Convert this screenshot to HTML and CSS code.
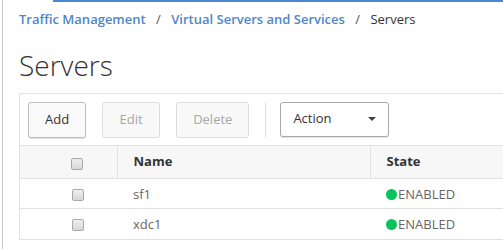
FILE: index.html
```html
<!DOCTYPE html>
<html lang="en">
<head>
<meta charset="utf-8" />
<title>Servers</title>
<link rel="stylesheet" href="styles.css">
</head>
<body>
<div class="frame">
  <div class="topline"></div>
  <nav class="crumbs">
    <a href="#">Traffic Management</a>
    <span class="sep">/</span>
    <a href="#">Virtual Servers and Services</a>
    <span class="sep">/</span>
    <span class="current">Servers</span>
  </nav>
  <h1>Servers</h1>
  <div class="panel">
    <div class="toolbar">
      <button class="btn">Add</button>
      <button class="btn" disabled>Edit</button>
      <button class="btn" disabled>Delete</button>
      <span class="divider"></span>
      <button class="btn select">Action <span class="caret"></span></button>
    </div>
    <table class="grid">
      <thead>
        <tr>
          <th class="chk"><span class="box"></span></th>
          <th class="name">Name</th>
          <th>State</th>
        </tr>
      </thead>
      <tbody>
        <tr>
          <td class="chk"><span class="box"></span></td>
          <td class="name">sf1</td>
          <td><span class="dot"></span>ENABLED</td>
        </tr>
        <tr>
          <td class="chk"><span class="box"></span></td>
          <td class="name">xdc1</td>
          <td><span class="dot"></span>ENABLED</td>
        </tr>
      </tbody>
    </table>
  </div>
</div>
</body>
</html>
```
FILE: styles.css
```css
*{box-sizing:border-box;}
body{
  margin:0;
  font-family:'Open Sans','Liberation Sans',sans-serif;
  color:#333;
  background:#fff;
}
.frame{
  position:relative;
  min-height:249px;
  margin-left:2px;
  border-left:1px solid #c8c8c8;
  padding-left:16px;
}
.topline{position:absolute;top:0;left:50px;right:0;height:2px;background:#4a86d4;}
.crumbs{padding-top:10px;font-size:13px;font-weight:600;height:28px;white-space:nowrap;}
.crumbs a{color:#4e86c8;text-decoration:none;}
.crumbs .sep{color:#555;font-weight:400;margin:0 7px;}
.crumbs .current{color:#333;font-weight:400;}
h1{margin:17px 0 0;font-size:28px;font-weight:300;color:#333;line-height:40px;height:48px;}
.panel{border:1px solid #e2e2e2;border-right:none;}
.toolbar{display:flex;align-items:center;gap:16px;padding:8px 8px 7px;height:51px;}
.btn{
  font:inherit;font-size:13px;color:#333;
  height:36px;padding:0 16px 2px;min-width:58px;
  background:#fafafa;border:1px solid #bdbdbd;border-radius:3px;
  box-shadow:0 1px 1px rgba(0,0,0,0.12);
}
.btn:disabled{color:#a7a7a7;border-color:#dcdcdc;box-shadow:none;background:#f9f9f9;}
.divider{width:1px;height:34px;background:#dcdcdc;margin-right:-2px;}
.select{
  display:flex;align-items:center;justify-content:space-between;
  width:109px;padding:0 12px 3px;background:#fff;border-color:#aaa;height:35px;margin-top:-1px;
}
.caret{width:0;height:0;border-left:4px solid transparent;border-right:4px solid transparent;border-top:4px solid #444;margin-top:2px;}
.grid{border-collapse:collapse;width:100%;font-size:13px;}
.grid th{
  background:#f7f7f7;text-align:left;font-weight:700;color:#333;
  height:33px;padding:0 0 3px 16px;border-top:1px solid #e2e2e2;border-bottom:1px solid #e2e2e2;
}
.grid th + th{border-left:1px solid #e2e2e2;}
.grid td{height:30px;padding:0 0 0 16px;color:#666;border-bottom:1px solid #e2e2e2;}
.grid tr:last-child td{border-bottom:none;}
.grid .chk{width:97px;padding:0 0 0 18px;text-align:center;}
.grid .name{width:253px;}
.box{display:inline-block;width:12px;height:12px;border:1px solid #a8a8a8;border-radius:2px;background:linear-gradient(#eee,#d8d8d8);vertical-align:middle;}
.dot{display:inline-block;width:11px;height:11px;border-radius:50%;background:#0bc160;vertical-align:-1px;margin-right:1px;}
```
